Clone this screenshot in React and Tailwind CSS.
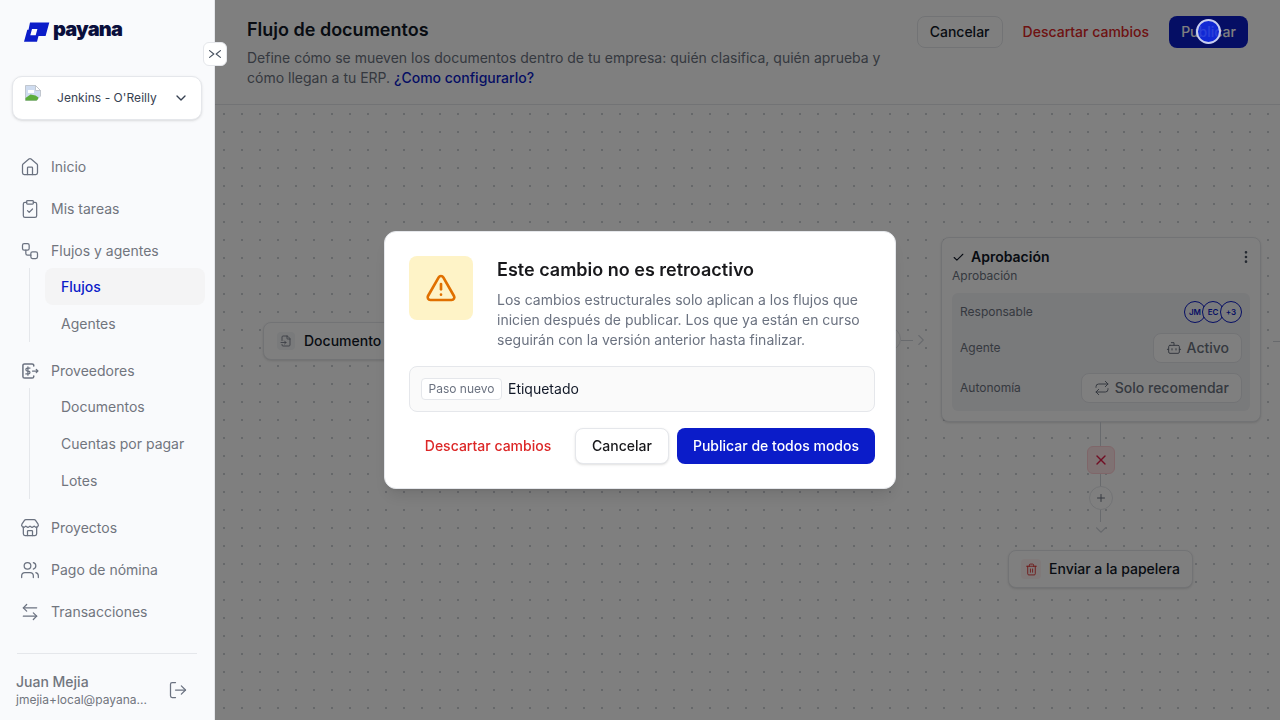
import React from "react";
import {
  House,
  ClipboardCheck,
  Workflow,
  Store,
  Users,
  ArrowLeftRight,
  LogOut,
  ChevronDown,
  ChevronRight,
  Check,
  EllipsisVertical,
  Bot,
  Repeat,
  Trash2,
  FileInput,
  Plus,
  X,
  TriangleAlert,
} from "lucide-react";

const Logo = () => (
  <svg width="26" height="20" viewBox="24 22 26 20" className="shrink-0">
    <path
      fillRule="evenodd"
      fill="#0b1cc9"
      d="M30 22.5H49.3L45.6 36H38.5L37 41.7H24l3.3-12H28.5zM32 29l-1.7 6.2h5.4L37.4 29z"
    />
  </svg>
);

// broken image placeholder of the browser
const BrokenImage = () => (
  <svg width="16" height="16" viewBox="0 0 16 16" className="shrink-0">
    <path d="M0.5 0.5h10l5 5v10h-15z" fill="#cfdcf0" stroke="#b8bcc4" strokeWidth="0.8" />
    <path d="M10.5 0.5v5h5z" fill="#fff" stroke="#b8bcc4" strokeWidth="0.8" />
    <path d="M3 5h6v3H3z" fill="#fff" />
    <path d="M0.5 15.5v-2.5l5-3.5 5 1 3 2-1 3z" fill="#5cad3c" />
    <path d="M11.5 16l4.5-5v5z" fill="#ffffff" />
  </svg>
);

const ProveedoresIcon = ({ className }) => (
  <svg width="20" height="20" viewBox="0 0 24 24" fill="none" stroke="currentColor" strokeWidth="1.8" strokeLinecap="round" strokeLinejoin="round" className={className}>
    <path d="M16.5 6V5.5a2 2 0 0 0-2-2H5.5a2 2 0 0 0-2 2v13a2 2 0 0 0 2 2h9a2 2 0 0 0 2-2V18" />
    <path d="M12 8.5H8.8a1.7 1.7 0 0 0 0 3.5h1.4a1.7 1.7 0 0 1 0 3.5H7M9.5 7v10" strokeWidth="1.5" />
    <path d="M15 12h6.5M19.5 10l2 2-2 2" strokeWidth="1.5" />
  </svg>
);

const NavItem = ({ icon: Icon, label }) => (
  <div className="flex h-[38px] items-center gap-[11px] px-[10px] text-sm text-[#71757e]">
    <Icon size={20} strokeWidth={1.5} className="shrink-0 text-[#6b7280]" />
    <span>{label}</span>
  </div>
);

const SubNav = ({ items, active }) => (
  <div className="ml-[29px] mt-[-2px] flex w-[176px] flex-col border-l border-[#e5e7eb] pl-[15px]">
    {items.map((item) => (
      <div
        key={item}
        className={
          item === active
            ? "flex h-[37px] items-center rounded-lg bg-[#f4f4f5] px-4 text-sm font-medium text-[#0b1cc9]"
            : "flex h-[37px] items-center rounded-lg px-4 text-sm text-[#71757e]"
        }
      >
        {item}
      </div>
    ))}
  </div>
);

const Sidebar = () => (
  <aside className="relative z-30 flex h-screen w-[215px] shrink-0 flex-col border-r border-[#e5e7eb] bg-[#f9fafc]">
    <div className="flex h-[76px] items-start gap-[3px] pl-6 pt-[21px]">
      <div className="pt-[1px]">
        <Logo />
      </div>
      <span className="mt-[-2px] text-[20px] font-black leading-[20px] tracking-[-0.8px] text-[#0a0f3c]">payana</span>
    </div>
    <div className="mx-3 flex h-11 items-center rounded-[10px] border border-[#e5e7eb] bg-white pl-3 pr-[12px] shadow-sm">
      <div className="mt-[-11px]">
        <BrokenImage />
      </div>
      <span className="ml-4 flex-1 text-xs tracking-[0.05px] text-[#374151]">Jenkins - O'Reilly</span>
      <ChevronDown size={16} className="text-[#374151]" />
    </div>
    <nav className="mt-7 flex flex-col gap-1 pl-[10px] pr-0">
      <NavItem icon={House} label="Inicio" />
      <NavItem icon={ClipboardCheck} label="Mis tareas" />
      <div className="mb-1.5">
        <NavItem icon={Workflow} label="Flujos y agentes" />
        <div className="ml-[-10px]">
          <SubNav items={["Flujos", "Agentes"]} active="Flujos" />
        </div>
      </div>
      <div className="mb-1.5">
        <NavItem icon={ProveedoresIcon} label="Proveedores" />
        <div className="ml-[-10px]">
          <SubNav items={["Documentos", "Cuentas por pagar", "Lotes"]} />
        </div>
      </div>
      <NavItem icon={Store} label="Proyectos" />
      <NavItem icon={Users} label="Pago de nómina" />
      <NavItem icon={ArrowLeftRight} label="Transacciones" />
    </nav>
    <div className="mx-[17px] mt-[22px] border-t border-[#e5e7eb]" />
    <div className="flex items-center justify-between pl-4 pr-[26px] pt-[19px]">
      <div className="flex flex-col">
        <span className="text-sm font-medium leading-[18px] text-[#71757e]">Juan Mejia</span>
        <span className="text-xs leading-[18px] text-[#71757e]">jmejia+local@payana...</span>
      </div>
      <LogOut size={20} strokeWidth={1.5} className="mt-[-3px] text-[#6b7280]" />
    </div>
    <button className="absolute left-[203px] top-[42px] flex h-6 w-6 items-center justify-center rounded-md border border-[#e5e7eb] bg-white text-[#4b5563]">
      <svg width="12" height="8" viewBox="0 0 12 8" fill="none" stroke="currentColor" strokeWidth="1.2" strokeLinecap="round" strokeLinejoin="round">
        <path d="M0.6 0.6L4.8 4 0.6 7.4M11.4 0.6L7.2 4l4.2 3.4" />
      </svg>
    </button>
  </aside>
);

const Header = () => (
  <header className="flex h-[105px] shrink-0 items-start justify-between border-b border-[#e5e7eb] bg-white pl-8 pr-8 pt-4">
    <div className="w-[650px]">
      <h1 className="text-lg font-semibold leading-7 text-[#111827]">Flujo de documentos</h1>
      <p className="mt-[4px] text-sm leading-5 text-[#6b7280]">
        Define cómo se mueven los documentos dentro de tu empresa: quién clasifica, quién aprueba y cómo llegan a tu ERP.{" "}
        <span className="font-medium text-[#0b1cc9]">¿Como configurarlo?</span>
      </p>
    </div>
    <div className="flex items-center">
      <button className="h-8 w-[86px] rounded-lg border border-[#e5e7eb] bg-white text-sm font-medium text-[#111827]">Cancelar</button>
      <button className="ml-5 text-sm font-medium text-[#dc2626]">Descartar cambios</button>
      <button className="ml-5 h-8 w-[79px] rounded-lg bg-[#0b1cc9] text-sm font-medium text-white">Publicar</button>
    </div>
  </header>
);

const Avatar = ({ text }) => (
  <div className="ml-[-4px] flex h-[22px] w-[22px] items-center justify-center rounded-full border border-[#0b1cc9] bg-[#f5f6fa] text-[8px] font-semibold text-[#0b1cc9]">
    {text}
  </div>
);

const CardRow = ({ label, children, className }) => (
  <div className={"flex items-center justify-between " + className}>
    <span className="text-xs text-[#6b7280]">{label}</span>
    {children}
  </div>
);

const Pill = ({ icon: Icon, text }) => (
  <div className="flex h-[30px] items-center gap-[5px] rounded-lg border border-[#e5e7eb] bg-white px-3 text-sm font-medium text-[#6b7280]">
    <Icon size={16} strokeWidth={1.5} />
    {text}
  </div>
);

const ApprovalCard = () => (
  <div className="absolute left-[726px] top-[132px] w-[320px] rounded-lg border border-[#e5e7eb] bg-white px-[10px] pb-[10px] pt-[9px] shadow-sm">
    <div className="flex items-center justify-between">
      <div className="flex items-center gap-[6px]">
        <Check size={13} strokeWidth={2} className="text-[#111827]" />
        <span className="text-sm font-semibold leading-[20px] text-[#111827]">Aprobación</span>
      </div>
      <EllipsisVertical size={16} className="mr-[-4px] text-[#4b5563]" />
    </div>
    <div className="mt-[1px] text-xs leading-[16px] text-[#6b7280]">Aprobación</div>
    <div className="mt-[9px] rounded-md bg-[#f3f4f6] pb-2 pl-2 pr-2 pt-2">
      <CardRow label="Responsable" className="h-[22px]">
        <div className="flex">
          <Avatar text="JM" />
          <Avatar text="EC" />
          <Avatar text="+3" />
        </div>
      </CardRow>
      <CardRow label="Agente" className="mt-[10px] h-[30px]">
        <Pill icon={Bot} text="Activo" />
      </CardRow>
      <CardRow label="Autonomía" className="mt-[10px] h-[30px]">
        <Pill icon={Repeat} text="Solo recomendar" />
      </CardRow>
    </div>
  </div>
);

const Canvas = () => (
  <div className="relative flex-1 overflow-hidden bg-white bg-[radial-gradient(circle,#cdd0d5_0.8px,transparent_1px)] bg-[size:18px_18px]">
    {/* start node */}
    <div className="absolute left-[48px] top-[217px] flex h-[38px] w-[170px] items-center gap-[9px] rounded-lg border border-[#e5e7eb] bg-white pl-[13px] shadow-sm">
      <div className="flex h-[18px] w-[18px] items-center justify-center rounded bg-[#f3f4f6] text-[#6b7280]">
        <FileInput size={12} strokeWidth={1.6} />
      </div>
      <span className="text-sm font-medium text-[#111827]">Documento</span>
    </div>

    {/* edge into approval card, mostly behind the modal */}
    <div className="absolute left-[662px] top-[222px] h-6 w-6 rounded-full border border-[#e5e7eb] bg-white" />
    <div className="absolute left-[686px] top-[235px] h-px w-[12px] bg-[#d1d5db]" />
    <ChevronRight size={18} strokeWidth={1.5} className="absolute left-[696.5px] top-[226px] text-[#d1d5db]" />
    <div className="absolute left-[1058px] top-[236px] h-px w-[8px] bg-[#d1d5db]" />

    <ApprovalCard />

    {/* reject branch */}
    <div className="absolute left-[885px] top-[317px] h-[100px] w-px bg-[#d1d5db]" />
    <div className="absolute left-[872px] top-[341px] flex h-7 w-7 items-center justify-center rounded-md border border-[#fecdd3] bg-[#ffe4e6] text-[#e11d48]">
      <X size={16} strokeWidth={2} />
    </div>
    <div className="absolute left-[874px] top-[381px] flex h-6 w-6 items-center justify-center rounded-full border border-[#e5e7eb] bg-white text-[#6b7280]">
      <Plus size={12} strokeWidth={2} />
    </div>
    <ChevronDown size={18} strokeWidth={1.5} className="absolute left-[876.5px] top-[416px] text-[#d1d5db]" />

    <div className="absolute left-[793px] top-[445px] flex h-[38px] w-[185px] items-center gap-2 rounded-lg border border-[#e5e7eb] bg-white pl-[12px] shadow-sm">
      <div className="flex h-5 w-5 items-center justify-center rounded bg-[#fef2f2] text-[#dc2626]">
        <Trash2 size={13} strokeWidth={1.6} />
      </div>
      <span className="text-sm font-medium text-[#111827]">Enviar a la papelera</span>
    </div>
  </div>
);

const Modal = () => (
  <div className="fixed inset-0 z-20 flex items-center justify-center">
    <div className="w-[512px] rounded-xl border border-[#e5e7eb] bg-white py-6 pl-6 pr-5 shadow-lg">
      <div className="flex gap-6">
        <div className="flex h-16 w-16 shrink-0 items-center justify-center rounded-lg bg-[#fef3c7] text-[#e07000]">
          <TriangleAlert size={32} strokeWidth={2} />
        </div>
        <div className="pr-1">
          <h2 className="text-lg font-semibold leading-7 text-[#18181b]">Este cambio no es retroactivo</h2>
          <p className="mt-[6px] text-sm leading-5 text-[#6b7280]">
            Los cambios estructurales solo aplican a los flujos que inicien después de publicar. Los que ya están en curso seguirán con la versión anterior hasta finalizar.
          </p>
        </div>
      </div>
      <div className="mt-4 flex h-[46px] items-center gap-[6px] rounded-lg border border-[#e5e7eb] bg-[#fafafa] px-[11px]">
        <span className="flex h-[22px] items-center rounded border border-[#e5e7eb] bg-white px-[6.5px] text-xs text-[#6b7280]">Paso nuevo</span>
        <span className="text-sm text-[#111827]">Etiquetado</span>
      </div>
      <div className="mt-4 flex justify-end gap-2">
        <button className="h-9 w-[158px] text-sm font-medium text-[#dc2626]">Descartar cambios</button>
        <button className="h-9 w-[94px] rounded-lg border border-[#e5e7eb] bg-white text-sm font-medium text-[#18181b] shadow-sm">Cancelar</button>
        <button className="h-9 w-[198px] rounded-lg bg-[#0b1cc9] text-sm font-medium text-white">Publicar de todos modos</button>
      </div>
    </div>
  </div>
);

export default function App() {
  return (
    <div className="flex h-screen w-full overflow-hidden bg-white font-['Inter',sans-serif]">
      <Sidebar />
      <main className="flex min-w-0 flex-1 flex-col">
        <Header />
        <Canvas />
      </main>
      {/* dim layer only over the main area, sidebar stays above it */}
      <div className="fixed inset-0 z-10 bg-black/50" />
      <Modal />
      {/* click marker left by the recording */}
      <div className="fixed left-[1196px] top-[19px] z-40 h-[25px] w-[25px] rounded-full border-2 border-[#c8cef0] bg-[#1430f0]/80" />
    </div>
  );
}
